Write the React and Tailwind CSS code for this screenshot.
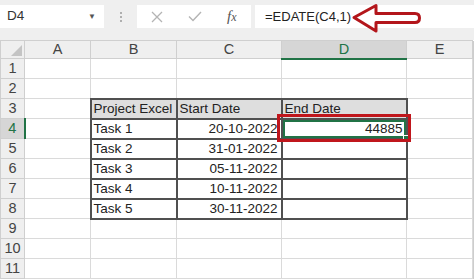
import React from "react";

const font = { fontFamily: '"Liberation Sans", Arial, sans-serif' };

const cols = ["A", "B", "C", "D", "E"];

const tasks = [
  ["Task 1", "20-10-2022"],
  ["Task 2", "31-01-2022"],
  ["Task 3", "05-11-2022"],
  ["Task 4", "10-11-2022"],
  ["Task 5", "30-11-2022"],
];

function ArrowMark() {
  return (
    <svg
      className="absolute left-[351px] top-[3px]"
      width="72"
      height="31"
      viewBox="0 0 72 31"
      fill="none"
    >
      <path
        d="M3 14.5 L25 2.5 L25 10.5 L64 10.5 Q68.5 10.5 68.5 15 Q68.5 19.5 64 19.5 L25 19.5 L25 28 Z"
        fill="white"
        stroke="#b3161b"
        strokeWidth="3"
        strokeLinejoin="round"
      />
    </svg>
  );
}

function TopBar() {
  return (
    <div className="relative flex h-[40px] items-start bg-[#efefef] pt-[5px]">
      {/* name box */}
      <div className="flex h-[23px] w-[104px] items-center justify-between bg-white pl-[7px] pr-[8px] text-[13.5px] text-[#333]">
        <span>D4</span>
        <span className="text-[8px] text-[#555]">▼</span>
      </div>
      {/* grip dots */}
      <div className="flex w-[33px] flex-col items-center gap-[2px] pt-[7px]">
        <span className="h-[2px] w-[2px] rounded-full bg-[#9a9a9a]" />
        <span className="h-[2px] w-[2px] rounded-full bg-[#9a9a9a]" />
        <span className="h-[2px] w-[2px] rounded-full bg-[#9a9a9a]" />
      </div>
      {/* buttons */}
      <div className="flex h-[23px] w-[114px] items-center bg-white">
        <svg className="ml-[14px]" width="12" height="12" viewBox="0 0 12 12">
          <path d="M1 1 L11 11 M11 1 L1 11" stroke="#b4b4b4" strokeWidth="1.3" />
        </svg>
        <svg className="ml-[25px]" width="14" height="11" viewBox="0 0 14 11">
          <path d="M1 5.5 L5 9.5 L13 1" stroke="#b4b4b4" strokeWidth="1.4" fill="none" />
        </svg>
        <span
          className="ml-[25px] text-[15px] italic text-[#555]"
          style={{ fontFamily: '"Liberation Serif", "Times New Roman", serif' }}
        >
          f<span className="text-[12px]">x</span>
        </span>
      </div>
      {/* formula */}
      <div className="ml-[4px] flex h-[23px] flex-1 items-center bg-white pl-[10px] text-[13px] text-[#222]">
        =EDATE(C4,1)
      </div>
      <ArrowMark />
    </div>
  );
}

function Sheet() {
  const rows = Array.from({ length: 11 }, (_, i) => i + 1);

  const cellText = (r, c) => {
    if (r === 3) return ["", "Project Excel", "Start Date", "End Date", ""][c];
    if (r >= 4 && r <= 8) {
      const t = tasks[r - 4];
      if (c === 1) return t[0];
      if (c === 2) return t[1];
      if (c === 3 && r === 4) return "44885";
    }
    return "";
  };

  const inTable = (r, c) => r >= 3 && r <= 8 && c >= 1 && c <= 3;

  return (
    <table className="w-[474px] table-fixed border-collapse text-[13.5px] text-[#222]">
      <colgroup>
        <col className="w-[24px]" />
        <col className="w-[66px]" />
        <col className="w-[86px]" />
        <col className="w-[105px]" />
        <col className="w-[125px]" />
        <col className="w-[66px]" />
        <col className="w-[2px]" />
      </colgroup>
      <thead>
        <tr className="h-[18px]">
          <th className="relative border border-[#cfcfcf] bg-[#efefef] p-0">
            <svg className="absolute bottom-[2px] right-[2px]" width="11" height="11" viewBox="0 0 11 11">
              <path d="M11 0 L11 11 L0 11 Z" fill="#c4c4c4" />
            </svg>
          </th>
          {cols.map((c) =>
            c === "D" ? (
              <th
                key={c}
                className="border border-b-2 border-[#cfcfcf] border-b-[#217346] bg-[#d6d6d6] p-0 text-[14.5px] font-normal leading-none text-[#217346]"
              >
                {c}
              </th>
            ) : (
              <th
                key={c}
                className="border border-[#cfcfcf] bg-[#efefef] p-0 text-[14.5px] font-normal leading-none text-[#444]"
              >
                {c}
              </th>
            )
          )}
          <th className="border-0 bg-[#cdcdcd] p-0" />
        </tr>
      </thead>
      <tbody>
        {rows.map((r) => (
          <tr key={r} className="h-[20px]">
            <td
              className={
                r === 4
                  ? "border border-r-2 border-[#cfcfcf] border-r-[#217346] bg-[#d6d6d6] p-0 text-center text-[14.5px] leading-none text-[#217346]"
                  : "border border-[#cfcfcf] bg-[#efefef] p-0 text-center text-[14.5px] leading-none text-[#444]"
              }
            >
              {r}
            </td>
            {[0, 1, 2, 3, 4].map((c) => {
              const txt = cellText(r, c);
              const right = r >= 4 && (c === 2 || c === 3);
              const selected = r === 4 && c === 3;
              let cls = "p-0 leading-none whitespace-nowrap overflow-visible ";
              cls += inTable(r, c)
                ? "border-2 border-[#505050] "
                : "border border-[#dadada] ";
              if (r === 3 && inTable(r, c)) cls += "bg-[#dedede] ";
              cls += right ? "text-right pr-[3px] " : "pl-[2px] ";
              if (selected) cls += "relative ";
              return (
                <td key={c} className={cls}>
                  {selected ? (
                    <>
                      <div className="absolute inset-0 border-2 border-[#217346]" />
                      <div className="absolute bottom-[-3px] right-[-3px] h-[6px] w-[6px] border border-white bg-[#217346]" />
                      <div className="absolute bottom-[-4px] left-[-6px] right-[-5px] top-[-6px] border-[3px] border-[#c0161c]" />
                      <span className="relative">{txt}</span>
                    </>
                  ) : (
                    txt
                  )}
                </td>
              );
            })}
            <td className="border-0 bg-[#cdcdcd] p-0" />
          </tr>
        ))}
      </tbody>
    </table>
  );
}

export default function App() {
  return (
    <div className="h-[280px] w-[474px] overflow-hidden bg-white" style={font}>
      <TopBar />
      <Sheet />
    </div>
  );
}
